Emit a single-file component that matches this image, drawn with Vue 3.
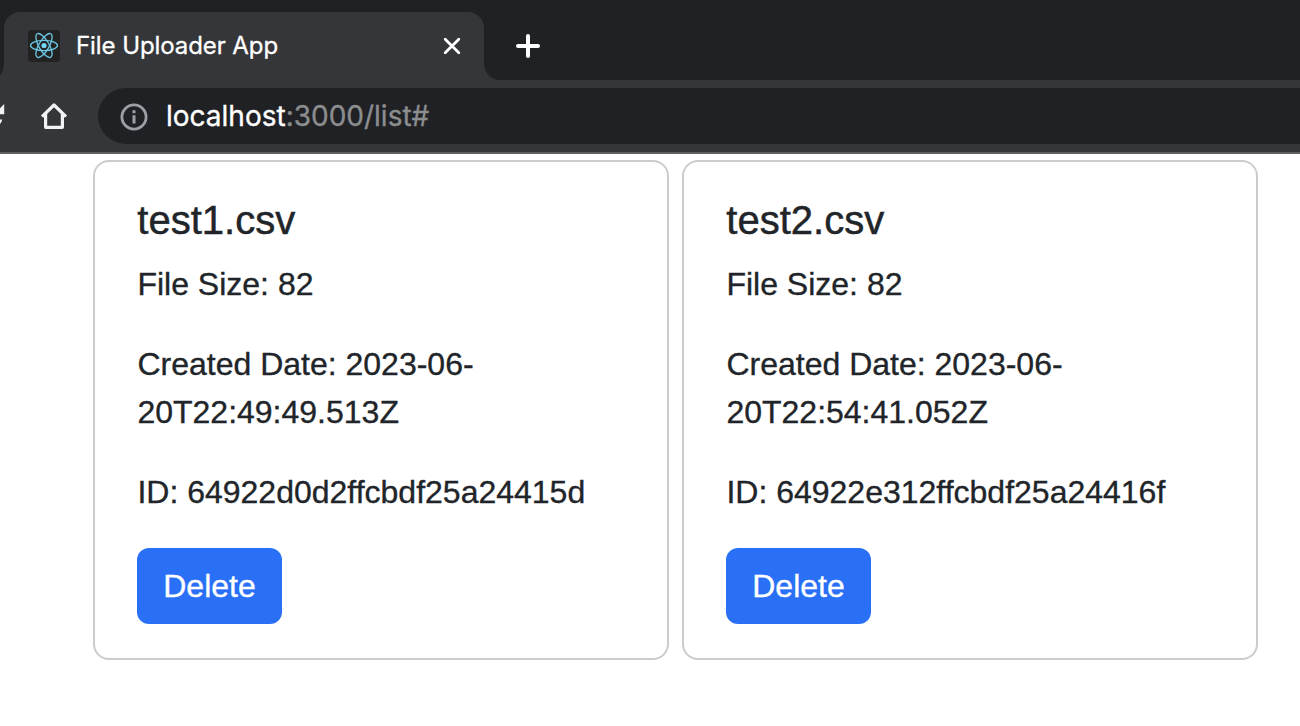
<script setup>
const files = [
  { name: 'test1.csv', size: 82, created: '2023-06-20T22:49:49.513Z', id: '64922d0d2ffcbdf25a24415d' },
  { name: 'test2.csv', size: 82, created: '2023-06-20T22:54:41.052Z', id: '64922e312ffcbdf25a24416f' },
]
</script>

<template>
  <div class="window">
    <div class="tabstrip">
      <svg class="flare" width="4" height="16" viewBox="0 0 4 16"><path d="M4 0C4 4.400 2.400 8.400 0 11.300V16H4Z" fill="#35363a" /></svg>
      <div class="tab">
        <svg class="favicon" width="32" height="32" viewBox="0 0 32 32">
          <rect width="32" height="32" rx="3.500" fill="#222" />
          <g fill="none" stroke="#6cc9e6" stroke-width="1.300">
            <ellipse cx="16" cy="15.500" rx="13.500" ry="5.100" />
            <ellipse cx="16" cy="15.500" rx="13.500" ry="5.100" transform="rotate(60 16 15.500)" />
            <ellipse cx="16" cy="15.500" rx="13.500" ry="5.100" transform="rotate(120 16 15.500)" />
          </g>
          <circle cx="16" cy="15.500" r="2.600" fill="#76d5f2" />
        </svg>
        <span class="tab-title">File Uploader App</span>
        <svg class="close" width="20" height="20" viewBox="0 0 20 20"><path d="M3.200 3.200L16.800 16.800M16.800 3.200L3.200 16.800" stroke="#fff" stroke-width="2.800" stroke-linecap="round" /></svg>
      </div>
      <svg class="flare" width="16" height="16" viewBox="0 0 16 16"><path d="M0 0A16 16 0 0 0 16 16H0Z" fill="#35363a" /></svg>
      <svg class="plus" width="24" height="24" viewBox="0 0 24 24"><path d="M12 2V22M2 12H22" stroke="#fff" stroke-width="4" stroke-linecap="round" /></svg>
    </div>
    <div class="toolbar">
      <svg class="reload" width="5" height="24" viewBox="0 0 5 24"><path d="M4.200 0V10.300H0V4.200Z" fill="#f1f3f4" /><path d="M0 15.500H2.300Q1.700 18.500 0 20Z" fill="#f1f3f4" /></svg>
      <svg class="home" width="28" height="28" viewBox="0 0 28 28"><path d="M2 14.700L14 3L26 14.700M5.600 12V25.300H22.400V12" fill="none" stroke="#f1f3f4" stroke-width="3.200" stroke-linejoin="round" /></svg>
      <div class="omnibox">
        <svg class="info" width="28" height="28" viewBox="0 0 28 28"><circle cx="14" cy="14" r="12.100" fill="none" stroke="#9aa0a6" stroke-width="2.800" /><path d="M12.500 7.300h3v3h-3zM12.500 12.200h3v8.300h-3z" fill="#9aa0a6" /></svg>
        <span class="url">localhost<span class="path">:3000/list#</span></span>
      </div>
    </div>
    <main class="cards">
      <article v-for="file in files" :key="file.id" class="card">
        <h5>{{ file.name }}</h5>
        <p>File Size: {{ file.size }}</p>
        <p>Created Date: {{ file.created }}</p>
        <p>ID: {{ file.id }}</p>
        <button>Delete</button>
      </article>
    </main>
  </div>
</template>

<style>
body { margin: 0; background: #fff; overflow: hidden; }
</style>

<style scoped>
* { box-sizing: border-box; }
svg { display: block; flex: none; }
.window { width: 1300px; height: 726px; overflow: hidden; background: #fff; font-family: "Liberation Sans", Arial, sans-serif; }
.tabstrip { height: 80px; background: #202124; display: flex; align-items: flex-end; }
.tab { width: 480px; height: 68px; background: #35363a; border-radius: 16px 16px 0 0; display: flex; align-items: center; padding: 0 22px 0 24px; }
.tab-title { margin-left: 16px; flex: 1; color: #fff; font: 24px/32px Inter, sans-serif; letter-spacing: -0.08px; white-space: nowrap; -webkit-text-stroke: 0.3px; }
.plus { margin: 0 0 22px 16px; }
.toolbar { height: 74px; background: #35363a; border-bottom: 2px solid #5f6063; display: flex; align-items: center; }
.home { margin-left: 35px; }
.omnibox { flex: 1; height: 56px; margin-left: 30px; background: #202124; border-radius: 28px 0 0 28px; display: flex; align-items: center; padding-left: 22.400px; }
.info { margin-top: 1px; }
.url { margin-left: 17.600px; color: #fff; font: 28px/36px Inter, sans-serif; white-space: nowrap; -webkit-text-stroke: 0.35px; }
.path { color: #8c8d8f; }
.cards { display: flex; gap: 13px; padding: 6px 0 0 93px; }
.card { width: 576px; height: 500px; border: 2px solid #ccc; border-radius: 16px; padding: 34px 42px; color: #212529; }
h5 { margin: 0 0 16px; padding-left: 0.300px; font-size: 40px; line-height: 48px; font-weight: 400; -webkit-text-stroke: 0.5px; }
p { margin: 0 0 32px; width: 400px; padding-left: 0.400px; font-size: 32px; line-height: 48px; white-space: normal; -webkit-text-stroke: 0.35px; }
p:nth-of-type(3) { white-space: nowrap; }
button { display: block; width: 145px; height: 76px; padding: 0; border: 0; border-radius: 12px; background: #2970f6; color: #fff; font: 32px/48px "Liberation Sans", Arial, sans-serif; -webkit-text-stroke: 0.35px; }
</style>
